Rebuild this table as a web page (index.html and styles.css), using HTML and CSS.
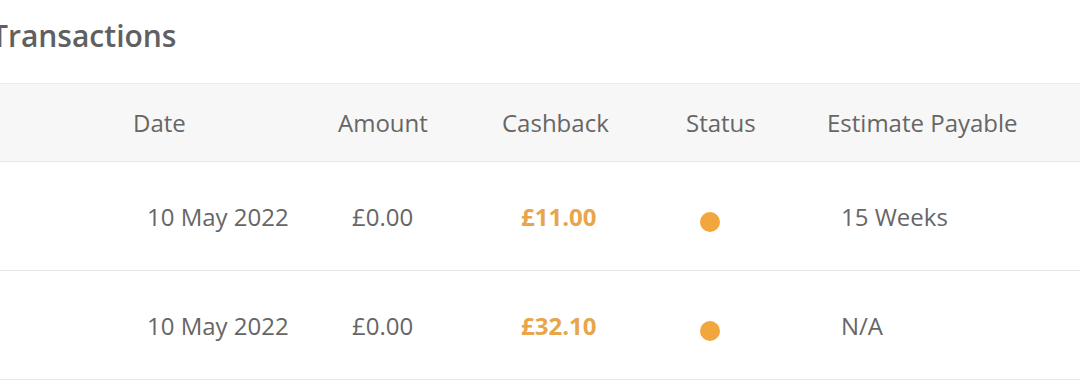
FILE: index.html
```html
<!doctype html>
<html lang="en">
  <head>
    <meta charset="utf-8">
    <meta name="viewport" content="width=device-width, initial-scale=1">
    <title>Transactions</title>
    <link rel="stylesheet" href="styles.css">
  </head>
  <body>
    <div class="page">
      <h2 class="title">Transactions</h2>
      <div class="table">
        <div class="row head">
          <div></div>
          <div>Date</div>
          <div>Amount</div>
          <div>Cashback</div>
          <div>Status</div>
          <div>Estimate Payable</div>
        </div>
        <div class="row">
          <div></div>
          <div class="cell">10 May 2022</div>
          <div class="cell">£0.00</div>
          <div class="cell cashback">£11.00</div>
          <div class="cell"><span class="dot"></span></div>
          <div class="cell">15 Weeks</div>
        </div>
        <div class="row">
          <div></div>
          <div class="cell">10 May 2022</div>
          <div class="cell">£0.00</div>
          <div class="cell cashback">£32.10</div>
          <div class="cell"><span class="dot"></span></div>
          <div class="cell">N/A</div>
        </div>
      </div>
    </div>
  </body>
</html>
```

FILE: styles.css
```css
body {
  margin: 0;
  background: white;
  font-family: "Open Sans", sans-serif;
  color: #666;
  overflow: hidden;
}
.page {
  padding-top: 16px;
}
.title {
  margin: 0 0 27px -9px;
  font-size: 30px;
  font-weight: 600;
  line-height: 40px;
  color: #606060;
}
.row {
  display: grid;
  grid-template-columns: 133px 205px 164px 184px 141px 1fr;
  align-items: center;
  height: 108px;
  border-bottom: 1px solid #e8e8e8;
  font-size: 24px;
}
.row.head {
  height: 77px;
  background: #f7f7f7;
  border-top: 1px solid #ececec;
  border-bottom: 1px solid #e6e6e6;
}
.cell {
  padding-left: 14px;
}
.cashback {
  padding-left: 19px;
  font-weight: 700;
  color: #e8a54a;
}
.dot {
  display: inline-block;
  width: 20px;
  height: 20px;
  margin-top: 6px;
  border-radius: 50%;
  background: #f2a73e;
  vertical-align: middle;
}
```
